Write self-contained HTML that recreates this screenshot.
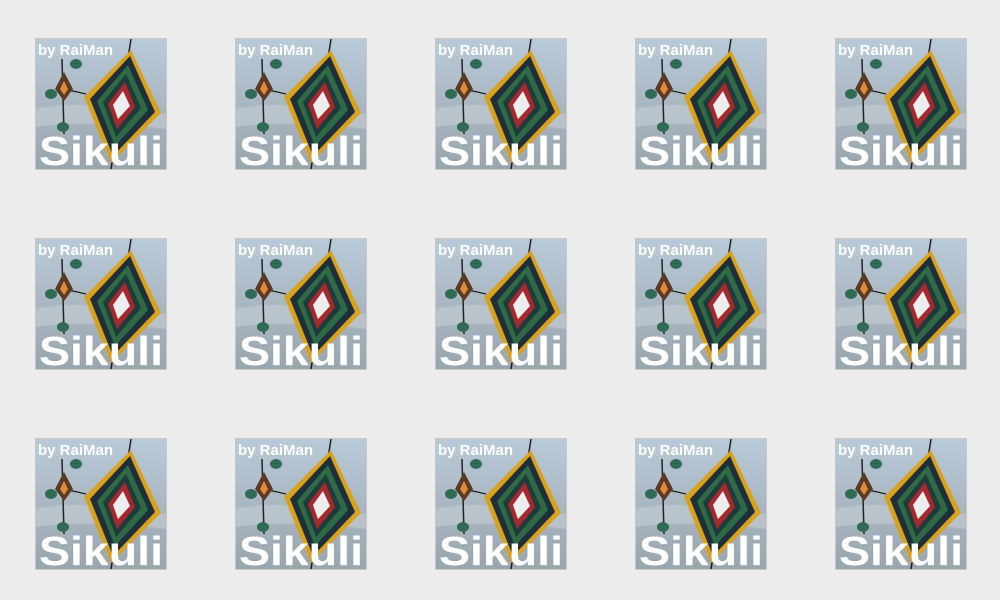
<!DOCTYPE html>
<html><head><meta charset="utf-8"><style>
html,body{margin:0;padding:0;background:#ececec;width:1000px;height:600px;overflow:hidden}
.t{position:absolute;width:130px;height:130px;border:1px solid #c6c6c6;background:#dfe3e6}
.t svg{display:block}
</style></head><body>
<div id="c"></div>
<template id="tp"><svg width="130" height="130" viewBox="0 0 130 130">
<defs><linearGradient id="sky" x1="0" y1="0" x2="0" y2="1"><stop offset="0" stop-color="#b9cad8"/><stop offset="0.5" stop-color="#a9b7c2"/><stop offset="1" stop-color="#9aa6ad"/></linearGradient></defs>
<rect width="130" height="130" fill="url(#sky)"/>
<path d="M0 70 Q40 60 130 75 L130 90 Q60 80 0 88Z" fill="#c4cdd3" opacity="0.6"/>
<line x1="95" y1="0" x2="75" y2="130" stroke="#222" stroke-width="1.5"/>
<line x1="26" y1="20" x2="28" y2="95" stroke="#222" stroke-width="1.5"/>
<line x1="28" y1="50" x2="50" y2="55" stroke="#222" stroke-width="1.2"/>
<polygon points="95,11 125,74 75,124 48,58" fill="#d9a21e"/>
<polygon points="94,17 119,73 77,117 54,60" fill="#1f2f3a"/>
<polygon points="92,26 112,71 79,107 61,62" fill="#2d6a45"/>
<polygon points="90,35 105,69 80,98 67,63" fill="#1f3b3a"/>
<polygon points="89,43 99,68 81,90 72,65" fill="#a52a2e"/>
<polygon points="87,52 94,67 82,80 77,66" fill="#eee"/>
<polygon points="28,33 37,50 28,62 19,50" fill="#5a3a25"/>
<polygon points="28,42 32,50 28,56 24,50" fill="#e38a3a"/>
<ellipse cx="40" cy="25" rx="6" ry="5" fill="#2f6b55"/>
<ellipse cx="15" cy="55" rx="6" ry="5" fill="#2f6b55"/>
<ellipse cx="27" cy="88" rx="6" ry="5" fill="#2f6b55"/>
<text x="2" y="16" font-family="Liberation Sans, sans-serif" font-weight="bold" font-size="15" fill="#fff">by RaiMan</text>
<text x="3" y="126" font-family="Liberation Sans, sans-serif" font-weight="bold" font-size="41" fill="#fff" textLength="124" lengthAdjust="spacingAndGlyphs">Sikuli</text>
</svg></template>
<script>
var c=document.getElementById('c'),tp=document.getElementById('tp');
for(var r=0;r<3;r++)for(var i=0;i<5;i++){var d=document.createElement('div');d.className='t';d.style.left=(35+i*200)+'px';d.style.top=(38+r*200)+'px';d.appendChild(tp.content.cloneNode(true));c.appendChild(d);}
</script>
</body></html>
